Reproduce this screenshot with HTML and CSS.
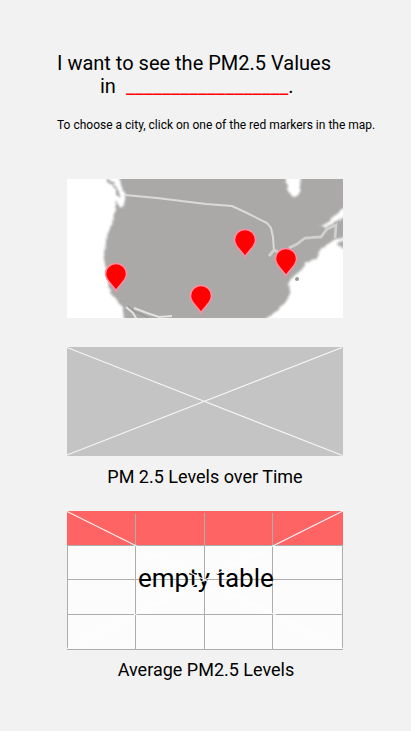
FILE: index.html
```html
<!DOCTYPE html>
<html lang="en">
<head>
<meta charset="utf-8">
<title>PM2.5 Values</title>
<link rel="stylesheet" href="styles.css">
</head>
<body>
<main class="screen">
  <h1 class="title">I want to see the PM2.5 Values<span class="city-line">in <span class="blank">__________________</span>.</span></h1>
  <p class="hint">To choose a city, click on one of the red markers in the map.</p>
  <svg class="map" viewBox="0 0 276 139">
    <defs>
      <filter id="soft" x="-5%" y="-5%" width="110%" height="110%"><feTurbulence type="fractalNoise" baseFrequency="0.3" numOctaves="2" seed="4" result="n"/><feDisplacementMap in="SourceGraphic" in2="n" scale="4" xChannelSelector="R" yChannelSelector="G"/><feGaussianBlur stdDeviation="0.8"/></filter>
      <filter id="haze" x="-5%" y="-5%" width="110%" height="110%"><feGaussianBlur stdDeviation="0.7"/></filter>
      <path id="pin" d="M0 17C-2 12-10.5 7-10.5 0A10.5 10.5 0 0 1 10.5 0C10.5 7 2 12 0 17Z"/>
    </defs>
    <rect width="276" height="139" fill="#fff"/>
    <g filter="url(#soft)">
      <path fill="#aaa9a8" d="M52-4L54 6 57 14 57 22 55 29 52 27 50 21 48 25 48 35 46 42 42 52 39 62 38 74 37 83 40 94 42 108 45 116 50 122 55 128 58 143H196L201 138 210 132 222 119 223 111 221 104 226 98 235 91 238 84 250 80 252 72 258 67 264 63 270 60 280 58V-4Z"/>
      <path fill="none" stroke="#999" stroke-width="2.4" d="M40 1L46 5 50 11 52 18"/>
      <path fill="none" stroke="#fff" stroke-width="2.6" d="M54 11L57 18 55 27"/>
      <path fill="#fff" d="M218-3H234L233 5 232 15 228 18 225 17 221 12 222 7 219 5Z"/>
      <path fill="#fff" d="M280 27L270 35 263 42 252 48 260 48 267 43 280 36Z"/>
      <path fill="#aaa" d="M270 64L278 61V69L272 68Z"/>
    </g>
    <g filter="url(#haze)" fill="none">
      <path stroke="#dadad9" stroke-width="2" d="M58 16L90 19 139 25 165 27 180 34 200 44 204 49 206 58 207 72"/>
      <path stroke="#d0d0cf" stroke-width="2.8" d="M202 77L207 71 213 74M222 69L230 65 238 59 254 58 260 50 269 46 268 59"/>
      <path stroke="#e3e3e3" stroke-width="2" d="M59 128L66 134 70 141M67 129L80 134 92 138 105 137"/>
      <path stroke="#999" stroke-width="1.5" d="M61 127L68 133 78 137 82 140"/>
      <circle cx="230" cy="100" r="2" fill="#999"/>
    </g>
    <g fill="#f00" stroke="#ff8da2" stroke-width="1.5">
      <use href="#pin" x="49" y="95"/>
      <use href="#pin" x="178" y="61"/>
      <use href="#pin" x="219" y="80"/>
      <use href="#pin" x="134" y="117"/>
    </g>
  </svg>
  <svg class="chart" viewBox="0 0 276 109">
    <rect width="276" height="109" fill="#c4c4c4"/>
    <path d="M0 .5L275.5 108.5M0 108L275 .5" stroke="#f7f7f7" stroke-width="1.1"/>
  </svg>
  <h2 class="caption">PM 2.5 Levels over Time</h2>
  <svg class="table" viewBox="0 0 276 139">
    <rect width="276" height="138" fill="#fcfcfc"/>
    <rect width="276" height="34" fill="#ff6464"/>
    <path d="M0 34.5H276M0 68.5H276M0 103.5H276M0 138.5H276M.5 34V138M68.5 3V138M137.5 2V138M205.5 2V138M275.5 34V138" fill="none" stroke="#adadad"/>
    <text class="table-label" x="71" y="76">empty table</text>
    <path d="M0 .5L276 137.5M0 137.5L276 0" stroke="#fff" stroke-width="1.1"/>
  </svg>
  <h2 class="caption table-caption">Average PM2.5 Levels</h2>
</main>
</body>
</html>
```
FILE: styles.css
```css
body {
  margin: 0;
  background: #f2f2f2;
  color: #000;
  font-family: Roboto, sans-serif;
}

.screen {
  display: flex;
  flex-direction: column;
  height: 731px;
  box-sizing: border-box;
  padding: 51px 0 0 67px;
  overflow: hidden;
}

.title {
  margin: 0 0 0 -10px;
  height: 48px;
  font-size: 20px;
  font-weight: 400;
  line-height: 24px;
  white-space: nowrap;
}

.city-line {
  display: block;
  padding-left: 43px;
  line-height: 22px;
}

.blank {
  color: #f00;
  margin-left: 5px;
}

.hint {
  margin: 18px 0 46px -10px;
  font-size: 12px;
  line-height: 16px;
  white-space: nowrap;
}

.map,
.chart,
.table {
  display: block;
  flex: none;
  width: 276px;
  height: 139px;
}

.chart {
  height: 109px;
  margin-top: 29px;
}

.caption {
  width: 276px;
  height: 24px;
  margin: 9px 0 22px;
  font-size: 18px;
  font-weight: 400;
  line-height: 24px;
  text-align: center;
}

.table-caption {
  width: 278px;
  margin-top: 8px;
}

.table-label {
  font-size: 26px;
}
```
